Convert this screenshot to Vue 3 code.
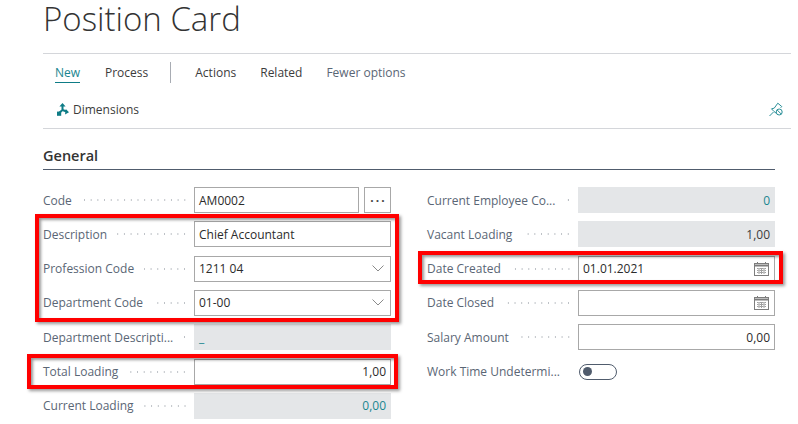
<script setup>
const left = [
  { label: 'Description', value: 'Chief Accountant' },
  { label: 'Profession Code', value: '1211 04', chevron: true },
  { label: 'Department Code', value: '01-00', chevron: true },
  { label: 'Department Descripti...', value: '_', readonly: true, teal: true },
  { label: 'Total Loading', value: '1,00', right: true },
  { label: 'Current Loading', value: '0,00', readonly: true, right: true, teal: true },
]
const rightCol = [
  { label: 'Current Employee Co...', value: '0', readonly: true, right: true, teal: true },
  { label: 'Vacant Loading', value: '1,00', readonly: true, right: true },
  { label: 'Date Created', value: '01.01.2021', calendar: true },
  { label: 'Date Closed', value: '', calendar: true },
  { label: 'Salary Amount', value: '0,00', right: true },
]
</script>

<template>
  <div class="page">
    <h1 class="title">Position Card</h1>
    <nav class="ribbon">
      <div class="tabs">
        <span class="tab active">New</span>
        <span class="tab process">Process</span>
        <span class="sep"></span>
        <span class="tab actions">Actions</span>
        <span class="tab related">Related</span>
        <span class="tab fewer">Fewer options</span>
      </div>
      <div class="tools">
        <span class="tool">
          <svg class="dim-icon" width="12" height="13" viewBox="0 0 12 13" fill="none" stroke="#0e7c86" stroke-width="2">
            <path d="M5.5 7 V2.5 M5.5 7 L9.5 8.5 M5.5 7 L2 10"/>
            <path d="M5.5 0 L8.6 3.4 H2.4 Z M12 9.3 L8 11.4 L8.8 6 Z" fill="#0e7c86" stroke="none"/>
            <rect x="0" y="8.6" width="4.2" height="4.2" fill="#0e7c86" stroke="none"/>
          </svg>
          Dimensions
        </span>
        <svg class="pin" width="14" height="15" viewBox="0 0 14 15" fill="none" stroke="#2a8f98" stroke-width="1">
          <path d="M0.5 14 L4.5 10 M2.5 6.8 L5.2 6.2 L8.8 1.2 L12.8 4.6 L11.6 5.8 M7.4 11.4 L5 9.5 L2.5 6.8"/>
          <circle cx="10.2" cy="10" r="3"/>
          <path d="M8.2 8 L12.2 12"/>
        </svg>
      </div>
    </nav>
    <section class="general">
      <h2 class="heading">General</h2>
      <div class="columns">
        <div class="col">
          <div class="field">
            <span class="label">Code</span><span class="dots"></span>
            <div class="code-wrap">
              <div class="input code-input">AM0002</div>
              <button class="more">···</button>
            </div>
          </div>
          <div v-for="f in left" :key="f.label" class="field">
            <span class="label">{{ f.label }}</span><span class="dots"></span>
            <div class="input" :class="{ readonly: f.readonly, right: f.right, teal: f.teal }">
              <span>{{ f.value }}</span>
              <svg v-if="f.chevron" class="chev" width="12" height="7" viewBox="0 0 12 7" fill="none" stroke="#8a8a8a" stroke-width="1">
                <path d="M0.5 0.5 L6 6 L11.5 0.5"/>
              </svg>
            </div>
          </div>
        </div>
        <div class="col">
          <div v-for="f in rightCol" :key="f.label" class="field">
            <span class="label">{{ f.label }}</span><span class="dots"></span>
            <div class="input" :class="{ readonly: f.readonly, right: f.right, teal: f.teal }">
              <span>{{ f.value }}</span>
              <svg v-if="f.calendar" class="cal" width="15" height="14" viewBox="0 0 15 14" fill="none" stroke="#7d7d7d" stroke-width="1">
                <rect x="0.5" y="1.5" width="14" height="12"/>
                <path d="M0.5 3.5 H14.5" stroke-width="2"/>
                <path d="M3.5 0 V2 M11.5 0 V2"/>
                <path d="M3 6.5 H12 M3 8.5 H12 M3 10.5 H12" stroke-dasharray="1.5 1" stroke="#a0a0a0"/>
                <path d="M5 6 V12 M7.5 6 V12 M10 6 V12" stroke="#a0a0a0"/>
              </svg>
            </div>
          </div>
          <div class="field">
            <span class="label">Work Time Undetermi...</span><span class="dots"></span>
            <div class="toggle-cell"><span class="toggle"><span class="knob"></span></span></div>
          </div>
        </div>
      </div>
    </section>
    <div class="mark mark-a"></div>
    <div class="mark mark-b"></div>
    <div class="mark mark-c"></div>
  </div>
</template>

<style>
html, body { margin: 0; background: #fff; overflow: hidden; }
</style>

<style scoped>
.page {
  position: relative;
  width: 798px;
  height: 424px;
  overflow: hidden;
  box-sizing: border-box;
  padding-left: 43px;
  font-family: "Open Sans", "Noto Sans", sans-serif;
  font-size: 12px;
  color: #2b2b2b;
}
.title {
  margin: 0;
  height: 54px;
  box-sizing: border-box;
  width: 748px;
  border-bottom: 1px solid #d4d6da;
  font-weight: 300;
  font-size: 33px;
  line-height: 37px;
  color: #333;
}
.ribbon {
  width: 748px;
  height: 75px;
  box-sizing: border-box;
  border-bottom: 1px solid #d4d6da;
}
.tabs {
  display: flex;
  align-items: center;
  height: 37px;
  padding-left: 12px;
}
.tab { color: #3c3c3c; line-height: 20px; }
.tab.active { color: #1a8690; border-bottom: 1px solid #0e7c86; height: 20px; box-sizing: border-box; width: 25px; }
.process { margin-left: 25px; }
.sep { width: 1px; height: 21px; background: #a8acb3; margin-left: 22px; }
.actions { margin-left: 24px; }
.related { margin-left: 24px; }
.fewer { margin-left: 24px; color: #5a6675; }
.tools {
  display: flex;
  align-items: center;
  justify-content: space-between;
  height: 36px;
  padding: 0 8px 0 14px;
}
.tool { display: flex; align-items: center; gap: 4px; color: #3c3c3c; }
.general { width: 732px; }
.heading {
  margin: 0;
  height: 41px;
  box-sizing: border-box;
  border-bottom: 1px solid #505c6d;
  padding-top: 17px;
  font-size: 14.5px;
  line-height: 20px;
  font-weight: 600;
  color: #333;
}
.columns {
  display: grid;
  grid-template-columns: 348px 348px;
  column-gap: 36px;
  margin-top: 17px;
}
.col { display: flex; flex-direction: column; gap: 8.33px; }
.field {
  display: flex;
  align-items: center;
  height: 26px;
}
.label { color: #5a6675; white-space: nowrap; }
.dots {
  flex: 1;
  height: 2px;
  margin: 0 6px 0 10px;
  min-width: 0;
  background-image: radial-gradient(circle, #bcc0c5 0.7px, transparent 0.9px);
  background-size: 6.7px 2px;
  background-position: right center;
}
.input, .toggle-cell, .code-wrap {
  flex: 0 0 197px;
  width: 197px;
  height: 26px;
  box-sizing: border-box;
}
.input {
  display: flex;
  align-items: center;
  justify-content: space-between;
  border: 1px solid #a8a8a8;
  padding: 0 4px;
  background: #fff;
}
.input.right { justify-content: flex-end; }
.input.readonly { background: #e4e6e8; border-color: #e4e6e8; color: #3c3c3c; }
.input.teal { color: #1a8690; }
.code-wrap { display: flex; gap: 5px; }
.code-input { flex: 0 0 165px; width: 165px; }
.more {
  flex: 0 0 27px;
  height: 26px;
  box-sizing: border-box;
  border: 1px solid #a8a8a8;
  background: #fff;
  padding: 0 0 0 2px;
  font: inherit;
  font-weight: 700;
  letter-spacing: 2px;
  color: #444;
}
.chev { margin-right: 2px; }
.cal { margin-right: 1px; }
.toggle-cell { display: flex; align-items: center; }
.toggle {
  display: flex;
  align-items: center;
  width: 38px;
  height: 16px;
  box-sizing: border-box;
  margin-left: 1px;
  border: 1px solid #505c6d;
  border-radius: 8px;
  padding-left: 3px;
}
.knob { width: 9px; height: 9px; border-radius: 50%; background: #505c6d; }
.mark {
  position: absolute;
  box-sizing: border-box;
  border: 4px solid #f00;
  box-shadow: 2px 2px 3px rgba(0, 0, 0, .4), inset 2px 2px 3px rgba(0, 0, 0, .4);
  pointer-events: none;
}
.mark-a { left: 35px; top: 214px; width: 364px; height: 108px; }
.mark-b { left: 27px; top: 354px; width: 371px; height: 35px; }
.mark-c { left: 418px; top: 251px; width: 365px; height: 33px; }
</style>
